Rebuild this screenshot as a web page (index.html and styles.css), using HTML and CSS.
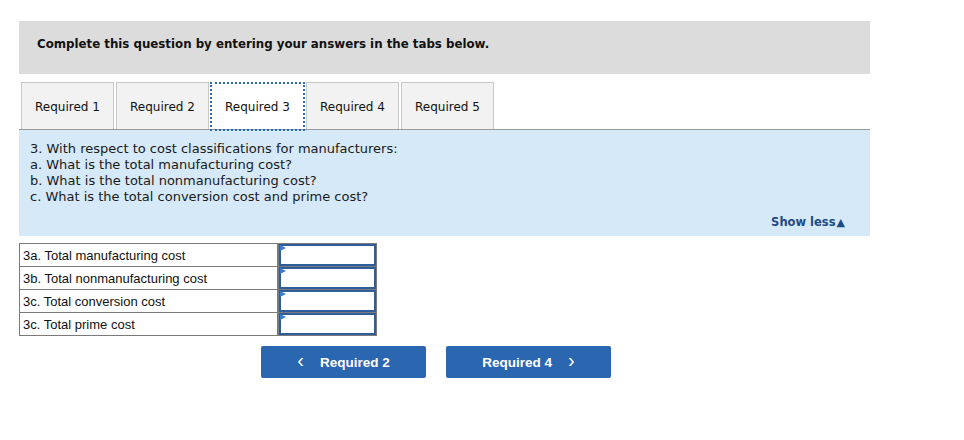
FILE: index.html
```html
<!DOCTYPE html>
<html>
<head>
<meta charset="utf-8">
<link rel="stylesheet" href="styles.css">
</head>
<body>
<div class="wrap">
  <div class="header">Complete this question by entering your answers in the tabs below.</div>
  <div class="tabs">
    <div class="tab">Required 1</div>
    <div class="tab">Required 2</div>
    <div class="tab active">Required 3</div>
    <div class="tab">Required 4</div>
    <div class="tab">Required 5</div>
  </div>
  <div class="panel">
    <div class="question">
      <div>3. With respect to cost classifications for manufacturers:</div>
      <div>a. What is the total manufacturing cost?</div>
      <div>b. What is the total nonmanufacturing cost?</div>
      <div>c. What is the total conversion cost and prime cost?</div>
    </div>
    <div class="showless">Show less<span class="tri">▲</span></div>
  </div>
  <table class="answers">
    <tr><td class="label">3a. Total manufacturing cost</td><td class="cell"><div class="input"></div></td></tr>
    <tr><td class="label">3b. Total nonmanufacturing cost</td><td class="cell"><div class="input"></div></td></tr>
    <tr><td class="label">3c. Total conversion cost</td><td class="cell"><div class="input"></div></td></tr>
    <tr><td class="label">3c. Total prime cost</td><td class="cell"><div class="input"></div></td></tr>
  </table>
  <div class="nav">
    <div class="btn"><span class="chev">&lsaquo;</span>Required 2</div>
    <div class="btn">Required 4<span class="chev right">&rsaquo;</span></div>
  </div>
</div>
</body>
</html>
```
FILE: styles.css
```css
html, body {
  margin: 0;
  padding: 0;
  background: #ffffff;
}
body {
  font-family: "DejaVu Sans", Verdana, sans-serif;
  color: #1a1a1a;
}
.wrap {
  margin: 21px 0 0 19px;
  width: 851px;
}
.header {
  background: #dcdcdc;
  height: 53px;
  box-sizing: border-box;
  padding: 16px 0 0 18px;
  font-weight: bold;
  font-size: 11.8px;
  color: #111;
}
.tabs {
  display: flex;
  gap: 2px;
  margin-top: 8px;
  padding-left: 2px;
}
.tab {
  box-sizing: border-box;
  width: 93px;
  height: 47px;
  padding-top: 2px;
  background: #f2f2f2;
  border: 1px solid #c8c8c8;
  border-bottom: none;
  font-size: 12px;
  display: flex;
  align-items: center;
  justify-content: center;
  color: #111;
}
.tab.active {
  background: #ffffff;
  border-color: #ffffff;
  position: relative;
  z-index: 1;
}
.tab.active::after {
  content: "";
  position: absolute;
  left: -2px;
  right: -2px;
  top: -1px;
  bottom: -2px;
  border: 2px dotted #2a6ab8;
}
.panel {
  background: #d5e9f8;
  border-top: 1px solid #999999;
  height: 107px;
  box-sizing: border-box;
  padding: 11px 25px 0 11px;
  display: flex;
  flex-direction: column;
}
.question {
  font-size: 13px;
  line-height: 16px;
  color: #1a1a1a;
}
.showless {
  margin-top: auto;
  margin-bottom: 7px;
  align-self: flex-end;
  font-size: 11.5px;
  font-weight: bold;
  color: #1f4a85;
}
.tri {
  font-size: 11px;
  margin-left: 1px;
}
.answers {
  margin-top: 7px;
  border-collapse: collapse;
  width: 358px;
  font-family: "Liberation Sans", Arial, sans-serif;
  font-size: 13px;
}
.answers td {
  border: 1px solid #7a7a7a;
  height: 22px;
  padding: 0;
}
.answers td.label {
  width: 254px;
  padding-left: 3px;
  border-right: 2px solid #7a7a7a;
  color: #111;
}
.answers td.cell {
  padding: 0;
}
.input {
  position: relative;
  box-sizing: border-box;
  height: 22px;
  border: 2px solid #2d5d9a;
  background: #fff;
}
.input::before {
  content: "";
  position: absolute;
  left: -1px;
  top: -1px;
  border-left: 6px solid #3b7ad0;
  border-top: 3px solid transparent;
  border-bottom: 3px solid transparent;
}
.nav {
  display: flex;
  gap: 20px;
  margin-top: 10px;
  padding-left: 242px;
}
.btn {
  width: 165px;
  height: 32px;
  background: #2b66b0;
  border-radius: 2px;
  color: #ffffff;
  font-family: "Liberation Sans", Arial, sans-serif;
  font-weight: bold;
  font-size: 13.5px;
  display: flex;
  align-items: center;
  justify-content: center;
}
.chev {
  font-size: 20px;
  font-weight: normal;
  margin-right: 16px;
  line-height: 1;
  position: relative;
  top: -2px;
}
.chev.right {
  margin-right: 0;
  margin-left: 16px;
}
```
